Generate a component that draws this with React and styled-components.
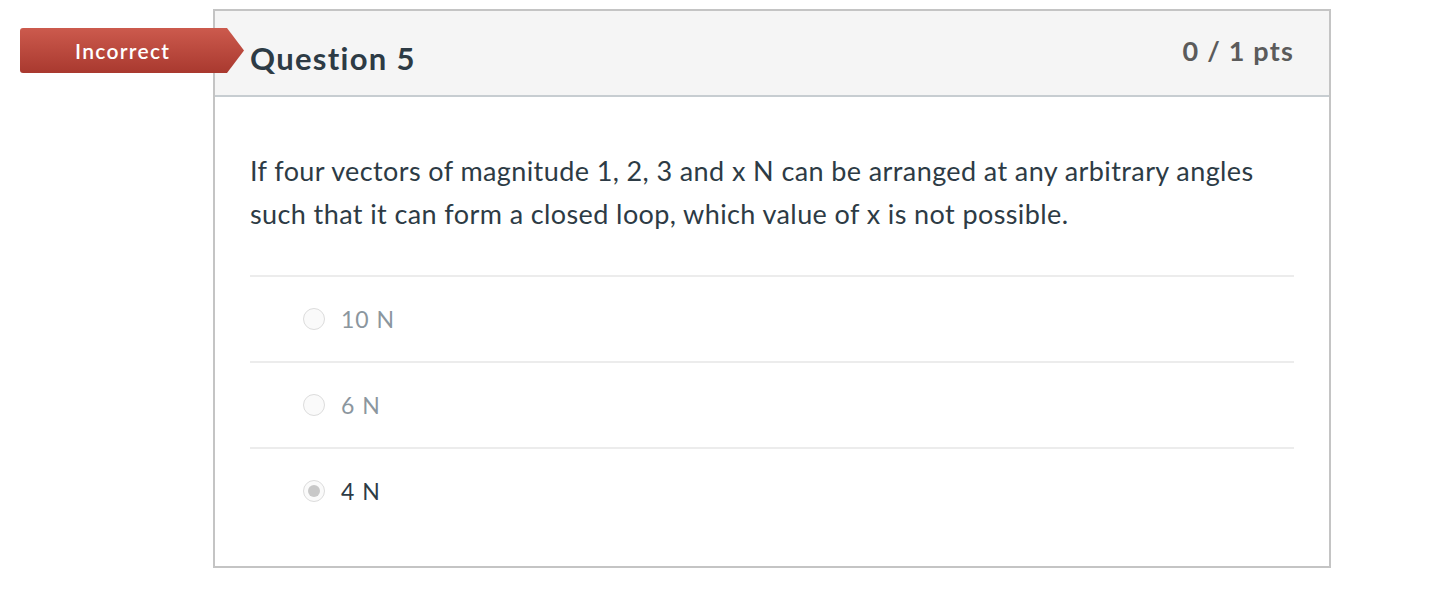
import styled, { createGlobalStyle } from "styled-components";

const GlobalStyle = createGlobalStyle`
  body {
    margin: 0;
    background: #fff;
    font-family: Lato, "Open Sans", sans-serif;
  }
`;

const Page = styled.div`
  padding: 9px 0 0 213px;
`;

const Card = styled.div`
  position: relative;
  width: 1118px;
  height: 559px;
  box-sizing: border-box;
  border: 2px solid #c4c4c4;
`;

const Badge = styled.div`
  position: absolute;
  left: -195px;
  top: 17px;
  width: 224px;
  height: 45px;
  display: flex;
  align-items: center;
  padding-left: 55px;
  box-sizing: border-box;
  color: #fff;
  font-size: 21px;
  font-weight: 600;
  letter-spacing: 1.3px;
  background: linear-gradient(#cc5a4d, #a9392f);
  border-radius: 3px 0 0 3px;
  clip-path: polygon(0 0, calc(100% - 17px) 0, 100% 50%, calc(100% - 17px) 100%, 0 100%);
`;

const Header = styled.div`
  display: flex;
  justify-content: space-between;
  align-items: flex-start;
  height: 86px;
  box-sizing: border-box;
  padding: 23px 35px 0 35px;
  background: #f5f5f5;
  border-bottom: 2px solid #c7cdd1;
`;

const Title = styled.div`
  color: #2d3b45;
  font-size: 31px;
  font-weight: 700;
  letter-spacing: 1.3px;
  margin-top: 5px;
`;

const Points = styled.div`
  color: #5b5b5b;
  font-size: 27px;
  font-weight: 700;
  letter-spacing: 1.2px;
`;

const Body = styled.div`
  padding: 52px 35px 0 35px;
`;

const Prompt = styled.p`
  margin: 0 0 40px;
  color: #2d3b45;
  font-size: 27px;
  letter-spacing: 0.4px;
  line-height: 43px;
`;

const Answer = styled.label`
  display: flex;
  align-items: center;
  gap: 16px;
  height: 86px;
  box-sizing: border-box;
  padding-left: 53px;
  border-top: 2px solid #ececec;
  color: ${(p) => (p.$selected ? "#2d3b45" : "#8b969e")};
  font-size: 23px;
  letter-spacing: 1px;
`;

const Radio = styled.span`
  width: 20px;
  height: 20px;
  border-radius: 50%;
  border: 1px solid #dcdcdc;
  background: #fafafa;
  display: flex;
  align-items: center;
  justify-content: center;

  &::after {
    content: "";
    width: 12px;
    height: 12px;
    border-radius: 50%;
    background: ${(p) => (p.$checked ? "#c8c8c8" : "transparent")};
  }
`;

const answers = [
  { text: "10 N" },
  { text: "6 N" },
  { text: "4 N", selected: true },
];

export default function App() {
  return (
    <Page>
      <GlobalStyle />
      <Card>
        <Badge>Incorrect</Badge>
        <Header>
          <Title>Question 5</Title>
          <Points>0 / 1 pts</Points>
        </Header>
        <Body>
          <Prompt>
            If four vectors of magnitude 1, 2, 3 and x N can be arranged at any
            arbitrary angles such that it can form a closed loop, which value of
            x is not possible.
          </Prompt>
          {answers.map((a) => (
            <Answer key={a.text} $selected={a.selected}>
              <Radio $checked={a.selected} />
              {a.text}
            </Answer>
          ))}
        </Body>
      </Card>
    </Page>
  );
}
